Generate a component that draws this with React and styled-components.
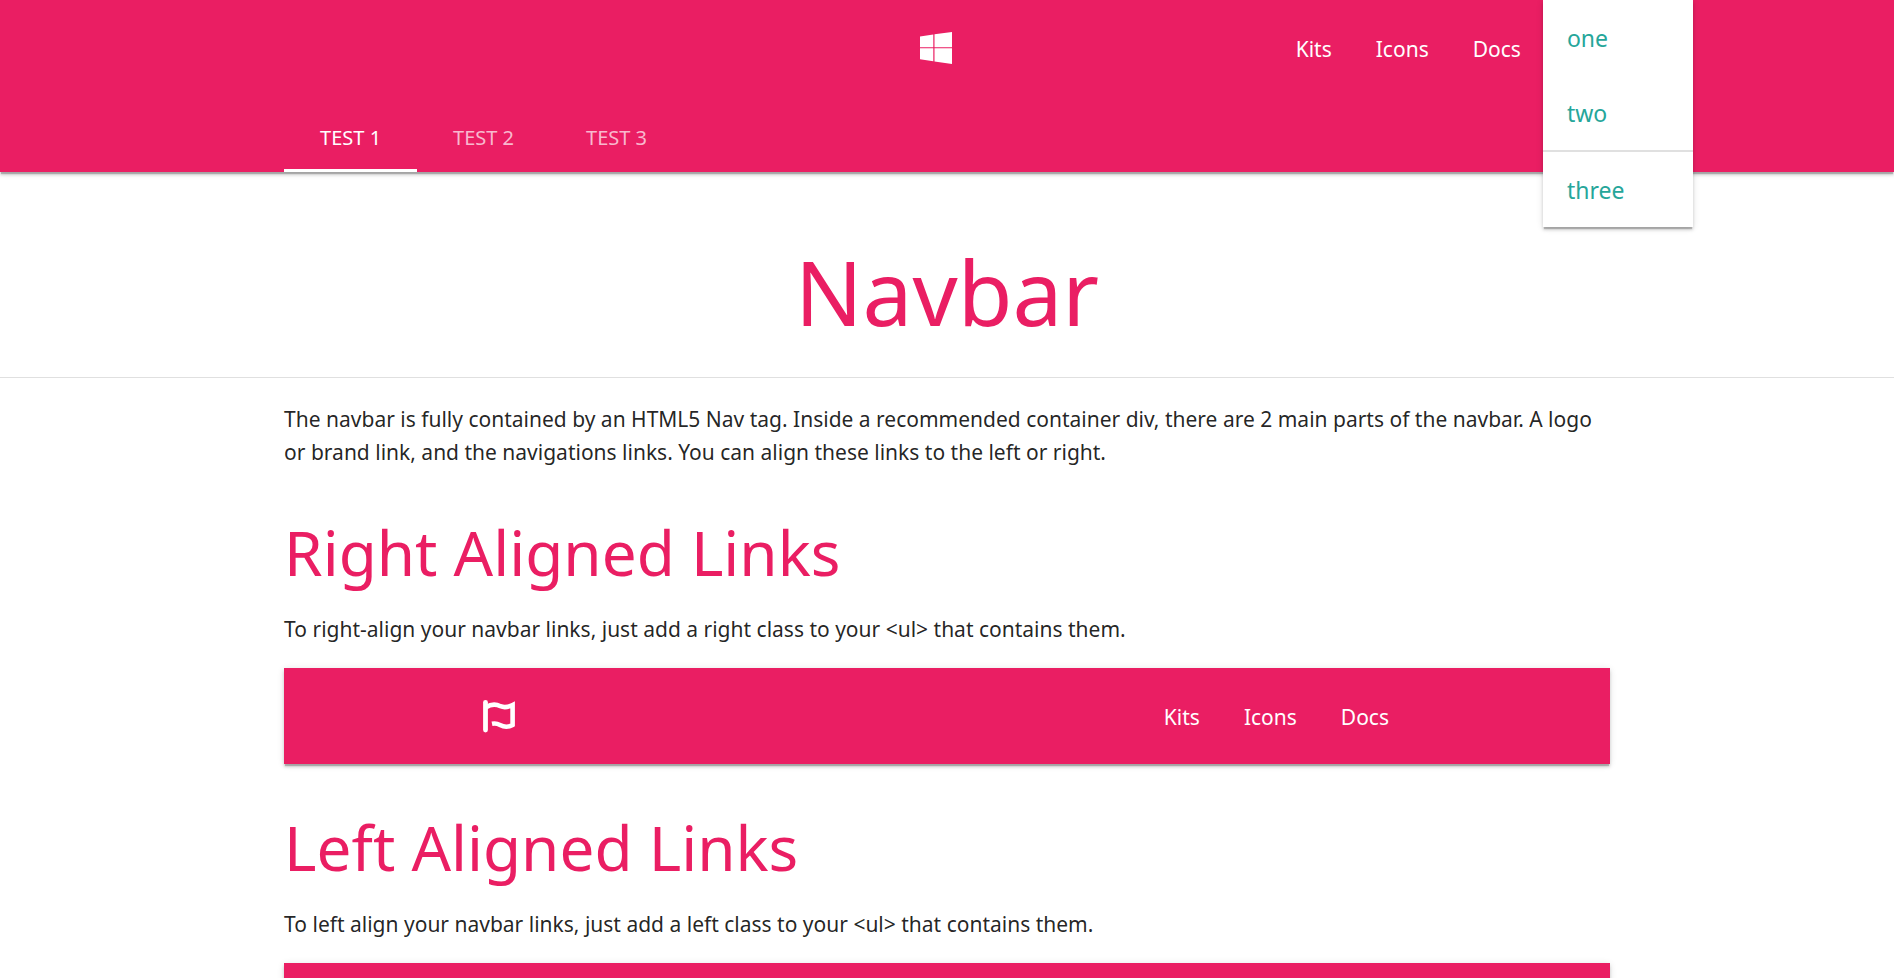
import React from 'react';
import styled, { createGlobalStyle } from 'styled-components';

const PINK = '#ea1e63';
const SHADOW =
  '0 3px 3px 0 rgba(0,0,0,.14), 0 1px 7px 0 rgba(0,0,0,.12), 0 3px 1px -1px rgba(0,0,0,.2)';

const GlobalStyle = createGlobalStyle`
  *, *::before, *::after { box-sizing: border-box; }
  body {
    margin: 0;
    background: #fff;
    color: rgba(0, 0, 0, .87);
    font: 400 21px/33px "Noto Sans", "Open Sans", sans-serif;
  }
  a { color: inherit; text-decoration: none; }
  ul { list-style: none; margin: 0; padding: 0; }
`;

const Container = styled.div`
  width: 70%;
  margin: 0 auto;
`;

const Header = styled.header`
  position: relative;
  background: ${PINK};
  color: #fff;
  box-shadow: ${SHADOW};
`;

const NavRow = styled(Container)`
  position: relative;
  display: flex;
  align-items: center;
  justify-content: ${(p) => (p.$side === 'left' ? 'flex-end' : 'space-between')};
  flex-direction: ${(p) => (p.$side === 'left' ? 'row-reverse' : 'row')};
  height: 96px;
`;

const Brand = styled.a`
  display: flex;
  align-items: center;
`;

const CenteredBrand = styled(Brand)`
  position: absolute;
  left: 50%;
  top: 0;
  height: 100%;
  padding-right: 22px;
  transform: translateX(-50%);
`;

const Links = styled.ul`
  display: flex;
  margin-left: ${(p) => (p.$push ? 'auto' : '0')};
`;

const LinkItem = styled.li`
  position: relative;
`;

const NavLink = styled.a`
  display: block;
  height: 96px;
  padding: 0 22px;
  line-height: 98px;
`;

const MenuButton = styled.button`
  display: block;
  width: 67px;
  height: 96px;
  padding: 0;
  border: 0;
  background: none;
  color: inherit;
`;

const Menu = styled.ul`
  position: absolute;
  z-index: 2;
  top: 0;
  left: 0;
  width: 150px;
  background: #fff;
  box-shadow: ${SHADOW};
`;

const MenuItem = styled.li`
  border-top: ${(p) => (p.$divided ? '2px solid #e0e0e0' : '0')};
`;

const MenuLink = styled.a`
  display: block;
  padding: 22px 24px 20px;
  color: #26a69a;
  font-size: 23px;
  line-height: 33px;
`;

const Tabs = styled.ul`
  display: flex;
  padding-top: 4px;
`;

const Tab = styled.a`
  display: block;
  height: 72px;
  padding: 0 36px;
  border-bottom: 3px solid ${(p) => (p.$active ? '#fff' : 'transparent')};
  color: ${(p) => (p.$active ? '#fff' : 'rgba(255,255,255,.7)')};
  font-size: 20px;
  line-height: 75px;
  text-transform: uppercase;
`;

const Title = styled.h1`
  margin: 0;
  padding: 65px 0 31px;
  border-bottom: 1px solid #e0e0e0;
  color: ${PINK};
  font-size: 89px;
  font-weight: 400;
  line-height: 109px;
  text-align: center;
`;

const Section = styled.section`
  padding-top: 46px;
`;

const Heading = styled.h2`
  margin: 0 0 24px;
  color: ${PINK};
  font-size: 62px;
  font-weight: 400;
  line-height: 74px;
`;

const Text = styled.p`
  margin: 0;
`;

const Intro = styled(Text)`
  padding-top: 25px;
`;

const DemoNav = styled.nav`
  margin-top: 22px;
  background: ${PINK};
  color: #fff;
  box-shadow: ${SHADOW};
`;

const WindowsLogo = () => (
  <svg width="32" height="32" viewBox="0 0 32 32" fill="#fff" aria-hidden="true">
    <path d="M0 4.4 13.300 2.400V15.200H0zM14.500 2.200 32 0V15.200H14.500zM0 16.200H13.300V29.200L0 27.200zM14.500 16.200H32V32L14.500 29.400z" />
  </svg>
);

const FlagIcon = () => (
  <svg width="32" height="34" viewBox="0 0 32 34" fill="none" stroke="#fff" aria-hidden="true">
    <path d="M2.5 3.3V31" strokeWidth="4.8" strokeLinecap="round" />
    <path
      d="M3 8.3C8 5 13 5 17.5 7.2C21.5 9 25.500 8 29.600 6V26C26 28 21.500 28.400 17 26C14.500 24.600 12 24.200 9 24.800"
      strokeWidth="4.6"
    />
  </svg>
);

const PageLinks = () =>
  ['Kits', 'Icons', 'Docs'].map((name) => (
    <LinkItem key={name}>
      <NavLink href="#">{name}</NavLink>
    </LinkItem>
  ));

const Demo = ({ side }) => (
  <DemoNav aria-label={`${side} aligned example`}>
    <NavRow $side={side}>
      <Brand href="#" aria-label="Brand">
        <FlagIcon />
      </Brand>
      <Links>
        <PageLinks />
      </Links>
    </NavRow>
  </DemoNav>
);

export default function App() {
  return (
    <>
      <GlobalStyle />
      <Header>
        <nav aria-label="Main">
          <NavRow>
            <CenteredBrand href="#" aria-label="Home">
              <WindowsLogo />
            </CenteredBrand>
            <Links $push>
              <PageLinks />
              <LinkItem>
                <MenuButton type="button" aria-label="More" aria-expanded="true" />
                <Menu>
                  <MenuItem><MenuLink href="#">one</MenuLink></MenuItem>
                  <MenuItem><MenuLink href="#">two</MenuLink></MenuItem>
                  <MenuItem $divided><MenuLink href="#">three</MenuLink></MenuItem>
                </Menu>
              </LinkItem>
            </Links>
          </NavRow>
          <Container>
            <Tabs>
              <li><Tab href="#" $active>Test 1</Tab></li>
              <li><Tab href="#">Test 2</Tab></li>
              <li><Tab href="#">Test 3</Tab></li>
            </Tabs>
          </Container>
        </nav>
      </Header>
      <main>
        <Title>Navbar</Title>
        <Container>
          <Intro>
            The navbar is fully contained by an HTML5 Nav tag. Inside a recommended container div,
            there are 2 main parts of the navbar. A logo or brand link, and the navigations links.
            You can align these links to the left or right.
          </Intro>
          <Section>
            <Heading>Right Aligned Links</Heading>
            <Text>To right-align your navbar links, just add a right class to your &lt;ul&gt; that contains them.</Text>
            <Demo side="right" />
          </Section>
          <Section>
            <Heading>Left Aligned Links</Heading>
            <Text>To left align your navbar links, just add a left class to your &lt;ul&gt; that contains them.</Text>
            <Demo side="left" />
          </Section>
        </Container>
      </main>
    </>
  );
}
